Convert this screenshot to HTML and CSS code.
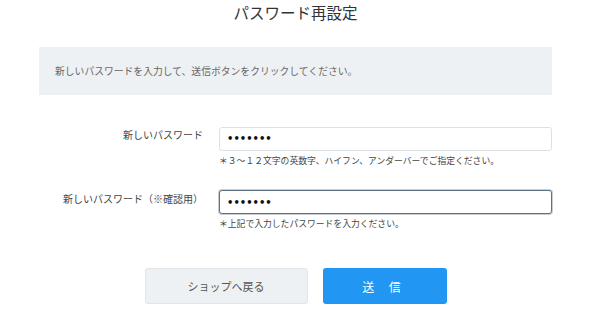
FILE: index.html
```html
<!DOCTYPE html>
<html lang="ja">
<head>
  <meta charset="UTF-8">
  <meta name="viewport" content="width=device-width, initial-scale=1.0">
  <title>パスワード再設定</title>
  <link rel="stylesheet" href="styles.css">
</head>
<body>
  <div class="container">
    <h1 class="page-title">パスワード再設定</h1>
    <div class="notice">新しいパスワードを入力して、送信ボタンをクリックしてください。</div>
    <form id="resetForm" class="reset-form">
      <div class="form-row">
        <label for="newPassword">新しいパスワード</label>
        <div class="field">
          <input type="password" id="newPassword" name="password" value="1234567">
          <p class="hint">＊３～１２文字の英数字、ハイフン、アンダーバーでご指定ください。</p>
        </div>
      </div>
      <div class="form-row">
        <label for="confirmPassword">新しいパスワード（※確認用）</label>
        <div class="field">
          <input type="password" id="confirmPassword" name="password_confirm" value="1234567" class="is-active" autofocus>
          <p class="hint">＊上記で入力したパスワードを入力ください。</p>
        </div>
      </div>
      <div class="actions">
        <button type="button" class="btn btn-back">ショップへ戻る</button>
        <button type="submit" class="btn btn-submit">送 信</button>
      </div>
    </form>
  </div>
</body>
</html>
```

FILE: styles.css
```css
body {
  font-family: "Noto Sans CJK JP", "Noto Sans", sans-serif;
  background-color: #fff;
  color: #333;
  margin: 0;
}

.container {
  width: 513px;
  margin-left: 39px;
}

.page-title {
  margin: 0;
  font-size: 15.5px;
  font-weight: normal;
  line-height: 24px;
  text-align: center;
  color: #333;
}

.notice {
  margin-top: 23px;
  height: 48px;
  padding-left: 16px;
  display: flex;
  align-items: center;
  background-color: #eef1f4;
  font-size: 9.8px;
  color: #666;
}

.reset-form {
  margin-top: 28px;
}

.form-row {
  display: grid;
  grid-template-columns: 164px 333px;
  column-gap: 16px;
  margin-bottom: 20px;
}

.form-row label {
  height: 24px;
  line-height: 24px;
  text-align: right;
  font-size: 10px;
  color: #444;
}

.field input {
  box-sizing: border-box;
  width: 100%;
  height: 24px;
  padding: 0 7px;
  border: 1px solid #dde1e4;
  border-radius: 3px;
  font-family: "DejaVu Sans", sans-serif;
  font-size: 10px;
  font-weight: bold;
  color: #111;
  outline: none;
}

.field input.is-active,
.field input:focus {
  border: 1px solid #5c7382;
  box-shadow: 0 0 0 1px rgba(92, 115, 130, 0.35);
}

.hint {
  margin: 4px 0 0;
  font-size: 8.8px;
  line-height: 12px;
  color: #444;
}

.actions {
  display: flex;
  justify-content: center;
  gap: 15px;
  margin-top: 38px;
}

.btn {
  height: 36px;
  border-radius: 3px;
  font-family: "Noto Sans CJK JP", "Noto Sans", sans-serif;
  cursor: pointer;
}

.btn-back {
  width: 163px;
  background-color: #eef1f4;
  border: 1px solid #e3e6e9;
  font-size: 11px;
  color: #555;
}

.btn-submit {
  width: 124px;
  background-color: #2196f3;
  border: none;
  font-size: 12px;
  letter-spacing: 6px;
  color: #fff;
}
```
